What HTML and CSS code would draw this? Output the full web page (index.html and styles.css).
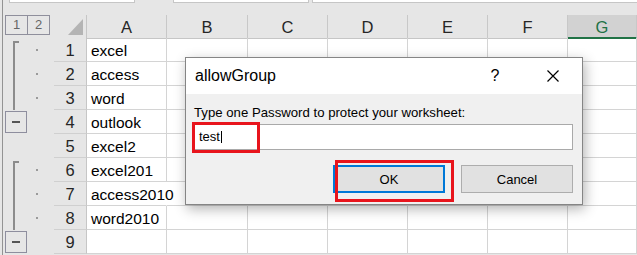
FILE: index.html
```html
<!DOCTYPE html>
<html lang="en">

<head>
  <meta charset="UTF-8">
  <title>allowGroup</title>
  <link rel="stylesheet" href="styles.css">
</head>
<body>

<div class="app">
  <!-- name box and formula bar (cut off at the top) -->
  <div class="topbar">
    <div class="namebox"></div>
    <div class="fxbox short"></div>
    <div class="fxbox long"></div>
  </div>

  <div class="sheet">
    <div class="row head">
      <div class="ol"><span class="lvl">1</span><span class="lvl">2</span></div>
      <div class="corner"><svg width="15" height="16" viewBox="0 0 15 16"><polygon points="15,0 15,16 0,16" fill="#b4b4b4"/></svg></div>
      <div class="ch">A</div>
      <div class="ch">B</div>
      <div class="ch">C</div>
      <div class="ch">D</div>
      <div class="ch">E</div>
      <div class="ch">F</div>
      <div class="ch sel">G</div>
    </div>

    <div class="row">
      <div class="ol"><span class="lane"><i class="br first"></i></span><span class="dots"><i class="dot"></i></span></div>
      <div class="rh">1</div>
      <div class="c">excel</div>
      <div class="c"></div><div class="c"></div><div class="c"></div><div class="c"></div><div class="c"></div><div class="c"></div>
    </div>
    <div class="row">
      <div class="ol"><span class="lane"><i class="br"></i></span><span class="dots"><i class="dot"></i></span></div>
      <div class="rh">2</div>
      <div class="c">access</div>
      <div class="c"></div><div class="c"></div><div class="c"></div><div class="c"></div><div class="c"></div><div class="c"></div>
    </div>
    <div class="row">
      <div class="ol"><span class="lane"><i class="br"></i></span><span class="dots"><i class="dot"></i></span></div>
      <div class="rh">3</div>
      <div class="c">word</div>
      <div class="c"></div><div class="c"></div><div class="c"></div><div class="c"></div><div class="c"></div><div class="c"></div>
    </div>
    <div class="row">
      <div class="ol"><span class="minus"><i></i></span></div>
      <div class="rh">4</div>
      <div class="c">outlook</div>
      <div class="c"></div><div class="c"></div><div class="c"></div><div class="c"></div><div class="c"></div><div class="c"></div>
    </div>
    <div class="row">
      <div class="ol"></div>
      <div class="rh">5</div>
      <div class="c">excel2</div>
      <div class="c"></div><div class="c"></div><div class="c"></div><div class="c"></div><div class="c"></div><div class="c"></div>
    </div>
    <div class="row">
      <div class="ol"><span class="lane"><i class="br first"></i></span><span class="dots"><i class="dot"></i></span></div>
      <div class="rh">6</div>
      <div class="c">excel201</div>
      <div class="c"></div><div class="c"></div><div class="c"></div><div class="c"></div><div class="c"></div><div class="c"></div>
    </div>
    <div class="row">
      <div class="ol"><span class="lane"><i class="br"></i></span><span class="dots"><i class="dot"></i></span></div>
      <div class="rh">7</div>
      <div class="c spill">access2010</div>
      <div class="c"></div><div class="c"></div><div class="c"></div><div class="c"></div><div class="c"></div><div class="c"></div>
    </div>
    <div class="row">
      <div class="ol"><span class="lane"><i class="br"></i></span><span class="dots"><i class="dot"></i></span></div>
      <div class="rh">8</div>
      <div class="c">word2010</div>
      <div class="c"></div><div class="c"></div><div class="c"></div><div class="c"></div><div class="c"></div><div class="c"></div>
    </div>
    <div class="row">
      <div class="ol"><span class="minus"><i></i></span></div>
      <div class="rh">9</div>
      <div class="c"></div>
      <div class="c"></div><div class="c"></div><div class="c"></div><div class="c"></div><div class="c"></div><div class="c"></div>
    </div>
  </div>

  <!-- password dialog -->
  <div class="dialog">
    <div class="dlg-title">
      <span class="dlg-name">allowGroup</span>
      <span class="dlg-help">?</span>
      <span class="dlg-close"><svg width="12" height="12" viewBox="0 0 12 12"><path d="M0.5 0.5 L11.5 11.5 M11.5 0.5 L0.5 11.5" stroke="#000" stroke-width="1.2" fill="none"/></svg></span>
    </div>
    <div class="dlg-body">
      <div class="dlg-label">Type one Password to protect your worksheet:</div>
      <div class="pw-wrap">
        <div class="pw">test<span class="caret"></span></div>
        <span class="mark mark-pw"></span>
      </div>
      <div class="dlg-buttons">
        <div class="btn-wrap">
          <button class="btn btn-ok">OK</button>
          <span class="mark mark-ok"></span>
        </div>
        <button class="btn">Cancel</button>
      </div>
    </div>
  </div>
</div>

</body>
</html>
```

FILE: styles.css
```css
body {
  margin: 0;
  width: 637px;
  height: 255px;
  overflow: hidden;
  background-color: #e6e6e6;
  font-family: "Liberation Sans", Arial, sans-serif;
  color: #000;
}

.app {
  position: relative;
  height: 255px;
  margin-left: 2px;
  border-left: 1px solid #939393;
}

/* top strip */
.topbar {
  display: flex;
  height: 15px;
}

.namebox,
.fxbox {
  height: 2px;
  background-color: #fff;
  border: 1px solid #c6c6c6;
  border-top: none;
}

.namebox {
  margin-left: 6px;
  width: 124px;
}

.fxbox.short {
  margin-left: 38px;
  width: 134px;
}

.fxbox.long {
  margin-left: 3px;
  flex: 1;
  border-right: none;
}

/* grid */
.row {
  display: grid;
  grid-template-columns: 51px 33px 80px 81px 80px 80px 80px 80px 1fr;
  height: 24px;
  background-color: #fff;
}

.row.head {
  height: 23px;
  background-color: #e6e6e6;
}

.row > div {
  box-sizing: border-box;
}

.ol {
  display: flex;
  background-color: #e6e6e6;
}

.lvl {
  box-sizing: border-box;
  width: 23px;
  height: 20px;
  border: 1px solid #8f8f9c;
  color: #666;
  font-size: 13px;
  line-height: 18px;
  text-align: center;
}

.lvl:first-child {
  margin-left: 2px;
}

.lvl + .lvl {
  margin-left: -1px;
}

.corner {
  display: flex;
  justify-content: flex-end;
  align-items: flex-end;
  padding: 0 3px 3px 0;
  border-right: 1px solid #c6c6c6;
  border-bottom: 1px solid #c6c6c6;
}

.ch {
  padding-top: 2px;
  border-right: 1px solid #c8c8c8;
  border-bottom: 1px solid #c6c6c6;
  color: #262626;
  font-size: 16.5px;
  line-height: 20px;
  text-align: center;
}

.ch.sel {
  background-color: #d2d2d2;
  color: #217346;
  border-bottom: 2px solid #217346;
}

.rh {
  padding-top: 2px;
  background-color: #e6e6e6;
  border-right: 1px solid #c6c6c6;
  border-bottom: 1px solid #d0d0d0;
  color: #262626;
  font-size: 16.5px;
  line-height: 21px;
  text-align: center;
}

/* cells stay transparent so long text can run into the next one */
.c {
  padding: 2px 0 0 4px;
  border-right: 1px solid #d4d4d4;
  border-bottom: 1px solid #d4d4d4;
  font-size: 15.5px;
  line-height: 21px;
  white-space: nowrap;
}

.c.spill {
  border-right-color: #fff;
}

/* outline brackets */
.lane {
  display: flex;
  width: 24px;
  box-sizing: border-box;
  padding-left: 10px;
}

.br {
  width: 0;
  border-left: 2px solid #8c8c8c;
}

.br.first {
  width: 4px;
  margin-top: 3px;
  border-top: 2px solid #8c8c8c;
}

.dots {
  display: flex;
  align-items: center;
  padding-left: 9px;
}

.dot {
  width: 2px;
  height: 2px;
  background-color: #9a9a9a;
}

.minus {
  display: flex;
  align-items: center;
  justify-content: center;
  box-sizing: border-box;
  width: 22px;
  height: 22px;
  margin: 1px 0 0 2px;
  border: 1px solid #8e8e9e;
}

.minus i {
  width: 8px;
  height: 2px;
  background-color: #555;
}

/* dialog */
.dialog {
  position: absolute;
  left: 182px;
  top: 57px;
  width: 398px;
  height: 148px;
  box-sizing: border-box;
  background-color: #f0f0f0;
  border: 1px solid #858585;
  box-shadow: 2px 4px 12px rgba(0,0,0,0.3);
}

.dlg-title {
  display: flex;
  align-items: center;
  height: 36px;
  padding-left: 9px;
  padding-right: 6px;
  background-color: #fff;
  font-size: 16px;
}

.dlg-name {
  flex: 1;
}

.dlg-help {
  width: 20px;
  margin-right: 25px;
  text-align: center;
}

.dlg-close {
  display: flex;
  justify-content: center;
  width: 46px;
}

.dlg-body {
  padding: 11px 9px 11px 8px;
  font-size: 13px;
}

.dlg-label {
  line-height: 16px;
  margin-bottom: 3px;
  white-space: nowrap;
  font-size: 13.2px;
}

.pw-wrap {
  position: relative;
}

.pw {
  height: 26px;
  box-sizing: border-box;
  padding-left: 4px;
  background-color: #fff;
  border: 1px solid #a9a9a9;
  line-height: 24px;
}

.caret {
  display: inline-block;
  width: 1px;
  height: 12px;
  margin-left: 1px;
  vertical-align: -2px;
  background-color: #000;
}

.mark {
  position: absolute;
  box-sizing: border-box;
  border: 3px solid #e8141c;
}

.mark-pw {
  left: -2px;
  top: -2px;
  width: 68px;
  height: 31px;
}

.dlg-buttons {
  display: flex;
  justify-content: flex-end;
  gap: 16px;
  margin-top: 15px;
}

.btn-wrap {
  position: relative;
}

.btn {
  display: block;
  width: 112px;
  height: 28px;
  box-sizing: border-box;
  background-color: #e1e1e1;
  border: 1px solid #adadad;
  font-family: "Liberation Sans", Arial, sans-serif;
  font-size: 13px;
  color: #000;
  padding: 0;
}

.btn-ok {
  border: 2px solid #0078d7;
}

.mark-ok {
  left: 2px;
  top: -5px;
  width: 119px;
  height: 42px;
}
```
